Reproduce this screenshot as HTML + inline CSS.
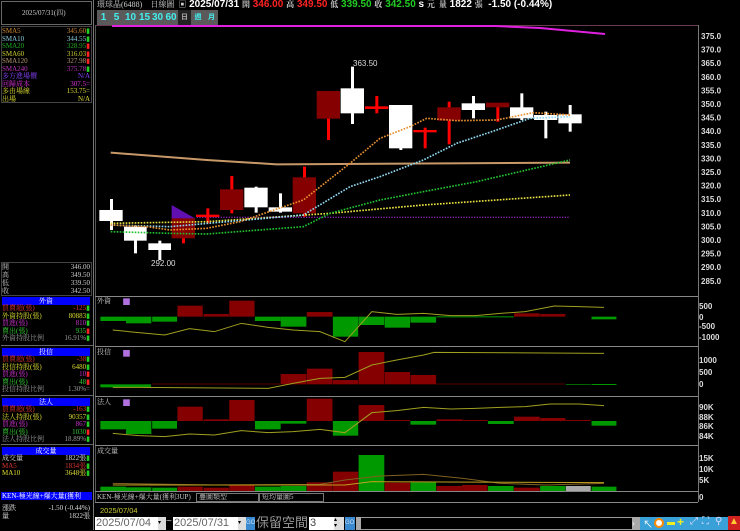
<!DOCTYPE html>
<html><head><meta charset="utf-8"><style>
*{margin:0;padding:0;box-sizing:border-box}
body{width:740px;height:530px;background:#000;overflow:hidden;position:relative;font-family:"Liberation Sans","Noto Sans CJK TC",sans-serif;color:#ddd}
.a{position:absolute;white-space:nowrap}
.s{font-family:"Liberation Serif","Noto Serif CJK SC",serif;font-size:7px;line-height:7px}
.r{position:absolute;left:2px;width:88px;height:8px;font-size:7px;line-height:8px;font-family:"Liberation Serif","Noto Serif CJK SC",serif;white-space:nowrap}
.r b{font-weight:normal;position:absolute;right:0}
.r i{font-style:normal;position:absolute;left:0}
.hd{position:absolute;left:2px;width:88px;height:8px;background:#0000ff;color:#fff;font-size:7px;line-height:8px;text-align:center;font-family:"Liberation Serif","Noto Serif CJK SC",serif}
.btn{position:absolute;top:10px;height:15px;background:#5a5a5a;color:#4ee;font-size:10px;line-height:15px;text-align:center;font-weight:bold}
.up{color:#f22}.dn{color:#2c2}
</style></head><body>
<div class="a" style="left:0;top:0;width:94px;height:530px;border-right:1px solid #777"></div>
<div class="a" style="left:1px;top:1px;width:91px;height:24px;border:1px solid #666"></div>
<div class="a s" style="left:22px;top:10px;color:#ccc">2025/07/31(四)</div>
<div class="a" style="left:1px;top:26px;width:91px;height:77px;border:1px solid #444"></div>
<div class="r" style="top:27px;color:#d08a30"><i>SMA5</i><b>345.60<span class="dn">▮</span></b></div>
<div class="r" style="top:34.5px;color:#8cd"><i>SMA10</i><b>344.55<span class="dn">▮</span></b></div>
<div class="r" style="top:42px;color:#2a2"><i>SMA20</i><b>328.95<span class="up">▮</span></b></div>
<div class="r" style="top:49.5px;color:#cc3"><i>SMA60</i><b>316.03<span class="up">▮</span></b></div>
<div class="r" style="top:57px;color:#b89870"><i>SMA120</i><b>327.98<span class="up">▮</span></b></div>
<div class="r" style="top:64.5px;color:#b3b"><i>SMA240</i><b>375.78<span class="dn">▮</span></b></div>
<div class="r" style="top:72px;color:#84f"><i>多方進場價</i><b>N/A</b></div>
<div class="r" style="top:79.5px;color:#d3d"><i>回歸成本</i><b>307.5=</b></div>
<div class="r" style="top:87px;color:#dd3"><i>多由場線</i><b>153.75=</b></div>
<div class="r" style="top:94.5px;color:#dd3"><i>出場</i><b>N/A</b></div>

<div class="a" style="left:1px;top:262px;width:91px;height:34px;border:1px solid #444"></div>
<div class="r" style="top:263px;color:#ccc"><i>開</i><b>346.00</b></div>
<div class="r" style="top:271px;color:#ccc"><i>高</i><b>349.50</b></div>
<div class="r" style="top:279px;color:#ccc"><i>低</i><b>339.50</b></div>
<div class="r" style="top:287px;color:#ccc"><i>收</i><b>342.50</b></div>

<div class="hd" style="top:297px">外資</div>
<div class="r" style="top:304px;color:#d33"><i>買賣超(張)</i><b>-125<span class="dn">▮</span></b></div>
<div class="r" style="top:311.5px;color:#dd3"><i>外資持股(張)</i><b>80883<span class="dn">▮</span></b></div>
<div class="r" style="top:319px;color:#c3c"><i>買進(張)</i><b>810<span class="dn">▮</span></b></div>
<div class="r" style="top:326.5px;color:#3c3"><i>賣出(張)</i><b>935<span class="up">▮</span></b></div>
<div class="r" style="top:334px;color:#999"><i>外資持股比例</i><b>16.91%<span class="dn">▮</span></b></div>
<div class="a" style="left:1px;top:345px;width:92px;border-top:1px solid #666"></div>
<div class="hd" style="top:348px">投信</div>
<div class="r" style="top:355px;color:#d33"><i>買賣超(張)</i><b>-38<span class="dn">▮</span></b></div>
<div class="r" style="top:362.5px;color:#dd3"><i>投信持股(張)</i><b>6480<span class="dn">▮</span></b></div>
<div class="r" style="top:370px;color:#c3c"><i>買進(張)</i><b>10<span class="up">▮</span></b></div>
<div class="r" style="top:377.5px;color:#3c3"><i>賣出(張)</i><b>48<span class="up">▮</span></b></div>
<div class="r" style="top:385px;color:#999"><i>投信持股比例</i><b>1.30%=</b></div>
<div class="a" style="left:1px;top:395px;width:92px;border-top:1px solid #666"></div>
<div class="hd" style="top:398px">法人</div>
<div class="r" style="top:405px;color:#d33"><i>買賣超(張)</i><b>-163<span class="dn">▮</span></b></div>
<div class="r" style="top:412.5px;color:#dd3"><i>法人持股(張)</i><b>90357<span class="dn">▮</span></b></div>
<div class="r" style="top:420px;color:#c3c"><i>買進(張)</i><b>867<span class="dn">▮</span></b></div>
<div class="r" style="top:427.5px;color:#3c3"><i>賣出(張)</i><b>1030<span class="up">▮</span></b></div>
<div class="r" style="top:435px;color:#999"><i>法人持股比例</i><b>18.89%<span class="dn">▮</span></b></div>
<div class="a" style="left:1px;top:444px;width:92px;border-top:1px solid #666"></div>
<div class="hd" style="top:447px">成交量</div>
<div class="r" style="top:454px;color:#ddd"><i>成交量</i><b>1822張<span class="dn">▮</span></b></div>
<div class="r" style="top:461.5px;color:#d33"><i>MA5</i><b>1834張<span class="dn">▮</span></b></div>
<div class="r" style="top:469px;color:#dd3"><i>MA10</i><b>3648張<span class="dn">▮</span></b></div>
<div class="hd" style="top:492px;left:1px;width:91px;text-align:left;padding-left:1px;overflow:hidden">KEN-極光線+爆大量(獲利3UP)</div>
<div class="r" style="top:504px;color:#ddd"><i>漲跌</i><b>-1.50 (-0.44%)</b></div>
<div class="r" style="top:511.5px;color:#ddd"><i>量</i><b>1822張</b></div>

<div class="a" style="left:97px;top:0;font-size:10px;line-height:10px;font-weight:bold;color:#fff">
<span class="s" style="font-size:8px;color:#ccc;font-weight:normal">環球晶(6488)&nbsp;&nbsp;&nbsp; 日線圖&nbsp; ▣</span> 2025/07/31 <span class="s" style="font-size:8px;color:#ccc">開</span> <span class="up">346.00</span> <span class="s" style="font-size:8px;color:#ccc">高</span> <span class="up">349.50</span> <span class="s" style="font-size:8px;color:#ccc">低</span> <span class="dn">339.50</span> <span class="s" style="font-size:8px;color:#ccc">收</span> <span class="dn">342.50</span> s <span class="s" style="font-size:8px;color:#ccc">元&nbsp; 量</span> 1822 <span class="s" style="font-size:8px;color:#ccc">張</span>&nbsp; -1.50 (-0.44%)</div>
<div class="btn" style="left:97px;width:13px">1</div>
<div class="btn" style="left:110px;width:13px">5</div>
<div class="btn" style="left:123px;width:15px">10</div>
<div class="btn" style="left:138px;width:13px">15</div>
<div class="btn" style="left:151px;width:13px">30</div>
<div class="btn" style="left:164px;width:14px">60</div>
<div class="btn" style="left:178px;width:13px;background:#222;color:#aaa;font-size:7px">日</div>
<div class="btn" style="left:191px;width:14px;font-size:7px">週</div>
<div class="btn" style="left:205px;width:13px;font-size:7px">月</div>

<svg class="a" style="left:0;top:0" width="740" height="530" viewBox="0 0 740 530">
<line x1="95" y1="25.5" x2="698" y2="25.5" stroke="#6a3a50"/>
<line x1="698.5" y1="25" x2="698.5" y2="502" stroke="#777"/>
<line x1="95.5" y1="25" x2="95.5" y2="502" stroke="#555"/>
<g stroke="#888" fill="none">
<line x1="95" y1="296.5" x2="698" y2="296.5"/><line x1="95" y1="346.5" x2="698" y2="346.5"/>
<line x1="95" y1="396.5" x2="698" y2="396.5"/><line x1="95" y1="445.5" x2="698" y2="445.5"/>
<line x1="95" y1="491.5" x2="698" y2="491.5"/><line x1="95" y1="502.5" x2="698" y2="502.5"/>
</g>
<polyline points="112,26 495,26 540,28 605,34" stroke="#e020e0" stroke-width="2" fill="none"/>
<g fill="#ddd" font-size="8" font-family="Liberation Sans,sans-serif" font-weight="bold">
<text x="701" y="39">375.0</text><text x="701" y="52.6">370.0</text><text x="701" y="66.2">365.0</text><text x="701" y="79.8">360.0</text><text x="701" y="93.4">355.0</text><text x="701" y="107">350.0</text><text x="701" y="120.6">345.0</text><text x="701" y="134.2">340.0</text><text x="701" y="147.8">335.0</text><text x="701" y="161.4">330.0</text><text x="701" y="175">325.0</text><text x="701" y="188.6">320.0</text><text x="701" y="202.2">315.0</text><text x="701" y="215.8">310.0</text><text x="701" y="229.4">305.0</text><text x="701" y="243">300.0</text><text x="701" y="256.6">295.0</text><text x="701" y="270.2">290.0</text><text x="701" y="283.8">285.0</text>
<text x="699" y="309">500</text><text x="699" y="320">0</text><text x="699" y="329">-500</text><text x="699" y="340">-1000</text>
<text x="699" y="363">1000</text><text x="699" y="375">500</text><text x="699" y="387">0</text>
<text x="699" y="410">90K</text><text x="699" y="420">88K</text><text x="699" y="429">86K</text><text x="699" y="439">84K</text>
<text x="699" y="461">15K</text><text x="699" y="472">10K</text><text x="699" y="483">5K</text><text x="699" y="500">0</text>
<text x="353" y="66" font-size="8" font-weight="normal">363.50</text>
<text x="151" y="266" font-size="8" font-weight="normal">292.00</text>
</g>
<g transform="translate(90,50) scale(0.33333)">
<polyline points="62,308 350,330 560,343 1440,338" stroke="#c89868" stroke-width="6" fill="none"/>
<polyline points="320,502 1440,502" stroke="#8020a0" stroke-width="4" stroke-dasharray="4 4" fill="none"/>
<polygon points="245,465 245,540 315,505" fill="#6010b0"/>
<g fill="#fff">
<rect x="60" y="447" width="9" height="93"/><rect x="28" y="480" width="70" height="33"/>
<rect x="132" y="527" width="9" height="83"/><rect x="102" y="530" width="68" height="42"/>
<rect x="205" y="572" width="9" height="58"/><rect x="175" y="580" width="68" height="20"/>
<rect x="494" y="410" width="9" height="78"/><rect x="463" y="413" width="70" height="59"/>
<rect x="567" y="430" width="9" height="58"/><rect x="536" y="472" width="70" height="13"/>
<rect x="783" y="50" width="9" height="172"/><rect x="752" y="115" width="70" height="75"/>
<rect x="928" y="165" width="9" height="135"/><rect x="897" y="165" width="70" height="130"/>
<rect x="1146" y="138" width="9" height="67"/><rect x="1115" y="160" width="70" height="20"/>
<rect x="1291" y="130" width="9" height="80"/><rect x="1260" y="172" width="70" height="33"/>
<rect x="1363" y="185" width="9" height="80"/><rect x="1332" y="195" width="70" height="15"/>
<rect x="1436" y="165" width="9" height="80"/><rect x="1405" y="193" width="70" height="27"/>
</g>
<g fill="#850000">
<rect x="245" y="505" width="70" height="60"/><rect x="390" y="418" width="70" height="62"/>
<rect x="608" y="382" width="70" height="108"/><rect x="680" y="123" width="70" height="83"/>
<rect x="1042" y="172" width="70" height="40"/><rect x="1188" y="158" width="70" height="14"/>
</g>
<g fill="#f00">
<rect x="276" y="565" width="9" height="15"/>
<rect x="421" y="378" width="9" height="40"/><rect x="421" y="480" width="9" height="10"/>
<rect x="639" y="350" width="9" height="32"/><rect x="639" y="490" width="9" height="10"/>
<rect x="711" y="206" width="9" height="64"/>
<rect x="1073" y="155" width="9" height="17"/><rect x="1073" y="212" width="9" height="71"/>
<rect x="1219" y="172" width="9" height="43"/>
<rect x="349" y="475" width="9" height="45"/><rect x="318" y="494" width="70" height="7"/>
<rect x="856" y="138" width="9" height="52"/><rect x="825" y="169" width="70" height="8"/>
<rect x="1001" y="233" width="9" height="62"/><rect x="970" y="240" width="70" height="7"/>
</g>
<g fill="none" stroke-width="5" stroke-dasharray="5 4">
<polyline stroke="#e8e040" points="62,520 350,515 720,490 1000,465 1440,435"/>
<polyline stroke="#20c030" points="62,545 240,550 350,552 640,530 720,490 870,450 1000,425 1160,395 1440,330"/>
<polyline stroke="#90d8f0" points="62,525 240,530 640,495 780,410 870,380 1000,330 1100,280 1220,240 1320,205 1440,200"/>
<polyline stroke="#e89030" points="62,525 170,530 240,540 350,535 450,515 640,450 780,340 870,265 960,230 1010,205 1100,212 1220,210 1330,188 1440,195"/>
</g>
</g>
<g transform="translate(90,290) scale(0.4145,0.33333)">
<g fill="#009a00">
<rect x="25" y="80" width="62" height="13"/><rect x="87" y="80" width="61" height="20"/><rect x="150" y="80" width="60" height="15"/>
<rect x="398" y="80" width="62" height="13"/><rect x="460" y="80" width="62" height="30"/><rect x="586" y="80" width="61" height="60"/>
<rect x="648" y="80" width="62" height="25"/><rect x="711" y="80" width="61" height="33"/><rect x="773" y="80" width="62" height="18"/>
<rect x="836" y="79" width="186" height="3"/><rect x="1210" y="80" width="60" height="8"/>
<rect x="25" y="283" width="122" height="9"/><rect x="1148" y="282" width="60" height="2"/><rect x="1210" y="282" width="60" height="3"/>
<rect x="25" y="393" width="62" height="25"/><rect x="87" y="393" width="61" height="39"/><rect x="150" y="393" width="60" height="23"/>
<rect x="398" y="393" width="62" height="25"/><rect x="460" y="393" width="62" height="8"/><rect x="586" y="393" width="61" height="44"/>
<rect x="773" y="393" width="62" height="11"/><rect x="960" y="393" width="62" height="9"/><rect x="1210" y="393" width="60" height="14"/>
<rect x="25" y="590" width="62" height="13"/><rect x="87" y="592" width="61" height="11"/><rect x="150" y="593" width="60" height="10"/>
<rect x="398" y="590" width="62" height="13"/><rect x="460" y="588" width="62" height="15"/><rect x="648" y="495" width="62" height="108"/>
<rect x="773" y="577" width="62" height="26"/><rect x="960" y="588" width="62" height="15"/><rect x="1086" y="588" width="61" height="15"/>
<rect x="1210" y="590" width="60" height="13"/>
</g>
<rect x="1148" y="588" width="60" height="15" fill="#aaa"/>
<g fill="#850000">
<rect x="211" y="47" width="61" height="33"/><rect x="274" y="72" width="61" height="8"/><rect x="336" y="32" width="61" height="48"/>
<rect x="523" y="66" width="62" height="14"/><rect x="1023" y="70" width="62" height="10"/><rect x="1086" y="72" width="61" height="8"/>
<rect x="150" y="281" width="310" height="2"/>
<rect x="460" y="252" width="62" height="31"/><rect x="523" y="236" width="62" height="47"/><rect x="586" y="270" width="61" height="13"/>
<rect x="648" y="186" width="62" height="97"/><rect x="711" y="246" width="61" height="37"/><rect x="773" y="255" width="62" height="28"/>
<rect x="836" y="281" width="310" height="2"/>
<rect x="211" y="350" width="61" height="43"/><rect x="274" y="388" width="61" height="5"/><rect x="336" y="330" width="61" height="63"/>
<rect x="523" y="326" width="62" height="67"/><rect x="648" y="345" width="62" height="48"/><rect x="711" y="390" width="61" height="3"/>
<rect x="836" y="388" width="62" height="5"/><rect x="898" y="390" width="61" height="3"/><rect x="1023" y="380" width="62" height="13"/>
<rect x="1086" y="384" width="61" height="9"/><rect x="1148" y="390" width="60" height="3"/>
<rect x="211" y="590" width="61" height="13"/><rect x="274" y="593" width="61" height="10"/><rect x="336" y="585" width="61" height="18"/>
<rect x="523" y="577" width="62" height="26"/><rect x="586" y="545" width="61" height="58"/><rect x="711" y="578" width="61" height="25"/>
<rect x="836" y="588" width="62" height="15"/><rect x="898" y="585" width="61" height="18"/><rect x="1023" y="593" width="62" height="10"/>
</g>
<g fill="none">
<polyline vector-effect="non-scaling-stroke" stroke="#a0a020" points="55,120 118,128 180,135 240,116 300,125 365,100 430,112 490,120 555,125 615,155 680,65 740,73 805,70 870,77 930,77 990,70 1050,65 1120,48 1180,50 1240,52"/>
<polyline vector-effect="non-scaling-stroke" stroke="#a0a020" points="55,292 118,292 430,295 490,280 555,265 615,262 680,225 740,210 805,195 830,187 1240,190"/>
<polyline vector-effect="non-scaling-stroke" stroke="#a0a020" points="55,430 118,437 180,440 240,432 300,435 365,422 430,428 490,425 555,418 615,428 680,368 740,362 805,352 870,357 930,355 990,352 1050,350 1110,342 1180,342 1240,347"/>
<polyline vector-effect="non-scaling-stroke" stroke="#806020" points="55,580 300,585 555,583 615,570 700,558 805,553 900,565 990,580 1100,585 1240,580"/>
<polyline vector-effect="non-scaling-stroke" stroke="#c0a020" points="55,585 615,585 680,575 1240,578"/>
</g>
<rect x="80" y="25" width="16" height="20" fill="#b070e0"/><rect x="80" y="180" width="16" height="20" fill="#b070e0"/><rect x="80" y="328" width="16" height="20" fill="#b070e0"/>
</g>
<g fill="#ccc" font-size="7" font-family="Liberation Serif,Noto Serif CJK SC,serif">
<text x="97" y="303">外資</text><text x="97" y="354">投信</text><text x="97" y="404">法人</text><text x="97" y="453">成交量</text>
<text x="97" y="499">KEN-極光線+爆大量(獲利3UP)</text><text x="199" y="499">疊圖類型</text><text x="262" y="499">短均量圖5</text>
</g>
<rect x="196.5" y="493.5" width="62" height="8" fill="none" stroke="#777"/><rect x="259.5" y="493.5" width="64" height="8" fill="none" stroke="#777"/>
<text x="100" y="513" fill="#cc3" font-size="7.5" font-family="Liberation Sans,sans-serif">2025/07/04</text>
</svg>
<div class="a" style="left:95px;top:517px;width:63px;height:13px;background:#fff;color:#666;font-size:11px;line-height:13px;padding-left:1px">2025/07/04</div>
<div class="a" style="left:158px;top:517px;width:8px;height:13px;background:#ddd;color:#000;font-size:6px;line-height:13px">▾</div>
<div class="a" style="left:166px;top:516px;color:#ccc;font-size:10px">~</div>
<div class="a" style="left:173px;top:517px;width:65px;height:13px;background:#fff;color:#666;font-size:11px;line-height:13px;padding-left:1px">2025/07/31</div>
<div class="a" style="left:238px;top:517px;width:8px;height:13px;background:#ddd;color:#000;font-size:6px;line-height:13px">▾</div>
<div class="a" style="left:246px;top:517px;width:9px;height:13px;background:#3a8ad0;color:#cde;font-size:6px;line-height:13px">GO</div>
<div class="a" style="left:256px;top:514px;color:#999;font-size:13px;font-family:'Noto Sans CJK TC',sans-serif;line-height:16px">保留空間</div>
<div class="a" style="left:309px;top:517px;width:25px;height:13px;background:#fff;color:#444;font-size:11px;line-height:13px;padding-left:1px">3</div>
<div class="a" style="left:334px;top:517px;width:10px;height:13px;background:#ddd;color:#000;font-size:6px;line-height:6px">▴<br>▾</div>
<div class="a" style="left:345px;top:517px;width:10px;height:13px;background:#3a8ad0;color:#cde;font-size:6px;line-height:13px">GO</div>
<div class="a" style="left:356px;top:517px;width:278px;height:13px;background:#000;border:1px solid #999"></div>
<div class="a" style="left:356px;top:517px;width:5px;height:13px;background:#aaa"></div>
<div class="a" style="left:632px;top:517px;width:8px;height:13px;background:#aaa;color:#fff;font-size:8px;line-height:13px">›</div>
<div class="a" style="left:640px;top:517px;width:88px;height:13px;background:#3aa0d8"></div>
<div class="a" style="left:643px;top:516px;color:#fff;font-size:10px">↖</div>
<div class="a" style="left:654px;top:518px;width:10px;height:10px;border-radius:5px;background:#fff;border:2px solid #f80"></div>
<div class="a" style="left:667px;top:522px;width:8px;height:3px;background:#ee2"></div>
<div class="a" style="left:677px;top:515px;color:#ee2;font-size:12px;font-weight:bold">+</div>
<div class="a" style="left:690px;top:516px;color:#ddf;font-size:10px">⤢</div>
<div class="a" style="left:702px;top:516px;color:#ddf;font-size:10px">⛶</div>
<div class="a" style="left:715px;top:516px;color:#ddf;font-size:10px">⚲</div>
<div class="a" style="left:728px;top:516px;width:12px;height:14px;background:#d02020;color:#fc3;font-size:10px;text-align:center">▲</div>
</body></html>
